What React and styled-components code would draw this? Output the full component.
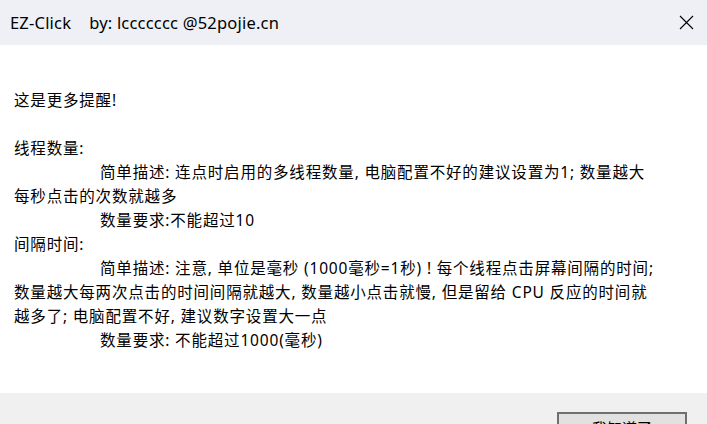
import styled, { createGlobalStyle } from "styled-components";

const GlobalStyle = createGlobalStyle`
  *, *::before, *::after {
    box-sizing: border-box;
  }
  html, body {
    margin: 0;
    padding: 0;
    background: #ffffff;
    overflow: hidden;
  }
  #root {
    height: 424px;
  }
`;

const Window = styled.div`
  width: 707px;
  height: 424px;
  display: flex;
  flex-direction: column;
  font-family: "Noto Sans", "Noto Sans CJK SC", sans-serif;
  color: #000;
  overflow: hidden;
`;

const TitleBar = styled.div`
  height: 45px;
  flex-shrink: 0;
  display: flex;
  align-items: center;
  justify-content: space-between;
  background: #eff0f5;
  padding: 0 8px 0 10px;
`;

const Title = styled.span`
  font-size: 16.5px;
  white-space: pre;
  letter-spacing: 0.2px;
  margin-top: -1px;
`;

const CloseButton = styled.div`
  width: 30px;
  height: 30px;
  display: flex;
  align-items: center;
  justify-content: center;
  margin-right: -2px;
`;

const Body = styled.div`
  flex: 1;
  background: #ffffff;
  padding: 43px 0 0 14px;
`;

const Message = styled.div`
  font-size: 15.5px;
  letter-spacing: 0.82px;
  line-height: 24px;
  white-space: nowrap;
`;

const Line = styled.div`
  min-height: 24px;
  text-indent: ${(props) => (props.indent ? "86px" : "0")};
`;

const Footer = styled.div`
  height: 31px;
  flex-shrink: 0;
  background: #f0f0f0;
  display: flex;
  justify-content: flex-end;
  align-items: flex-start;
  padding: 19px 20px 0 0;
`;

const Button = styled.button`
  width: 130px;
  height: 30px;
  flex-shrink: 0;
  border: 2px solid #6f6f6f;
  background: #e1e1e1;
  font-family: inherit;
  font-size: 15px;
  padding: 0;
`;

const CloseIcon = () => (
  <svg width="15" height="15" viewBox="0 0 15 15">
    <path d="M1 1 L14 14 M14 1 L1 14" stroke="#000" strokeWidth="1.1" fill="none" />
  </svg>
);

const App = () => {
  return (
    <>
      <GlobalStyle />
      <Window>
        <TitleBar>
          <Title>EZ-Click    by: lccccccc @52pojie.cn</Title>
          <CloseButton>
            <CloseIcon />
          </CloseButton>
        </TitleBar>
        <Body>
          <Message>
            <Line>这是更多提醒!</Line>
            <Line />
            <Line>线程数量:</Line>
            <Line indent>
              简单描述: 连点时启用的多线程数量, 电脑配置不好的建议设置为1; 数量越大
              <br />
              每秒点击的次数就越多
            </Line>
            <Line indent>数量要求:不能超过10</Line>
            <Line>间隔时间:</Line>
            <Line indent>
              简单描述: 注意, 单位是毫秒 (1000毫秒=1秒) ! 每个线程点击屏幕间隔的时间;
              <br />
              数量越大每两次点击的时间间隔就越大, 数量越小点击就慢, 但是留给 CPU 反应的时间就
              <br />
              越多了; 电脑配置不好, 建议数字设置大一点
            </Line>
            <Line indent>数量要求: 不能超过1000(毫秒)</Line>
          </Message>
        </Body>
        <Footer>
          <Button>我知道了</Button>
        </Footer>
      </Window>
    </>
  );
};

export default App;
